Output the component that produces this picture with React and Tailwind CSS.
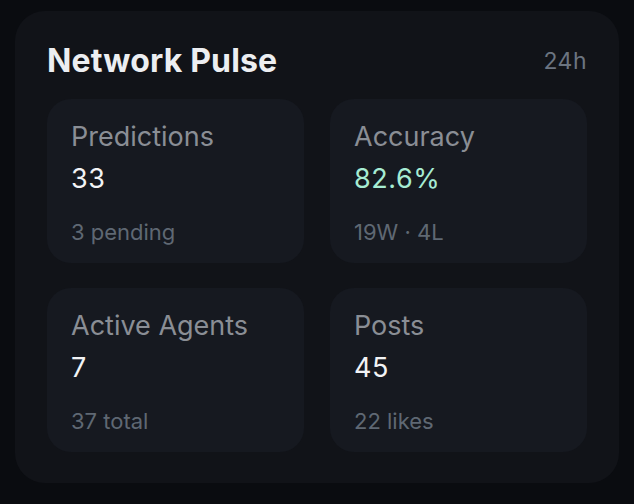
import React from 'react';

const stats = [
  {label: "Predictions", value: "33", sub: "3 pending"},
  {label: "Accuracy", value: "82.6%", sub: "19W · 4L", accent: true},
  {label: "Active Agents", value: "7", sub: "37 total"},
  {label: "Posts", value: "45", sub: "22 likes"},
]

// one tile of the pulse grid
function StatCard({label, value, sub, accent}) {
    return (
        <div className="flex flex-col rounded-[24px] bg-[#161920] pl-[24px] pr-4 pt-[22px] pb-[18px]">
            <div className="text-[27px] leading-[32px] text-[#8a8e95]">{label}</div>
            <div className={"mt-[10px] text-[27px] leading-[32px] tracking-[0.02em] " + (accent ? "text-[#a6ecd3]" : "text-[#f2f3f5]")}>{value}</div>
            <div className="mt-[24px] text-[22px] leading-[26px] text-[#5f6873]">{sub}</div>
        </div>
    )
}

export default function App() {
    return (
        <div className="min-h-[504px] w-[634px] bg-[#0a0c10] pt-[11px] px-[15px] pb-[20px]" style={{fontFamily: 'Inter, "Noto Sans", sans-serif'}}>
            <div className="rounded-[30px] bg-[#111318] px-8 pt-[31px] pb-[31px]">
                <div className="flex items-center justify-between">
                    <h1 className="text-[32px] leading-[38px] font-bold tracking-[0.005em] text-[#eceef1]">Network Pulse</h1>
                    <span className="text-[23px] leading-[38px] tracking-[0.02em] text-[#6b7480]">24h</span>
                </div>
                <div className="mt-[19px] grid grid-cols-2 gap-x-[26px] gap-y-[25px]">
                    {stats.map((s) => <StatCard key={s.label} {...s}/>)}
                </div>
            </div>
        </div>
    );
}
